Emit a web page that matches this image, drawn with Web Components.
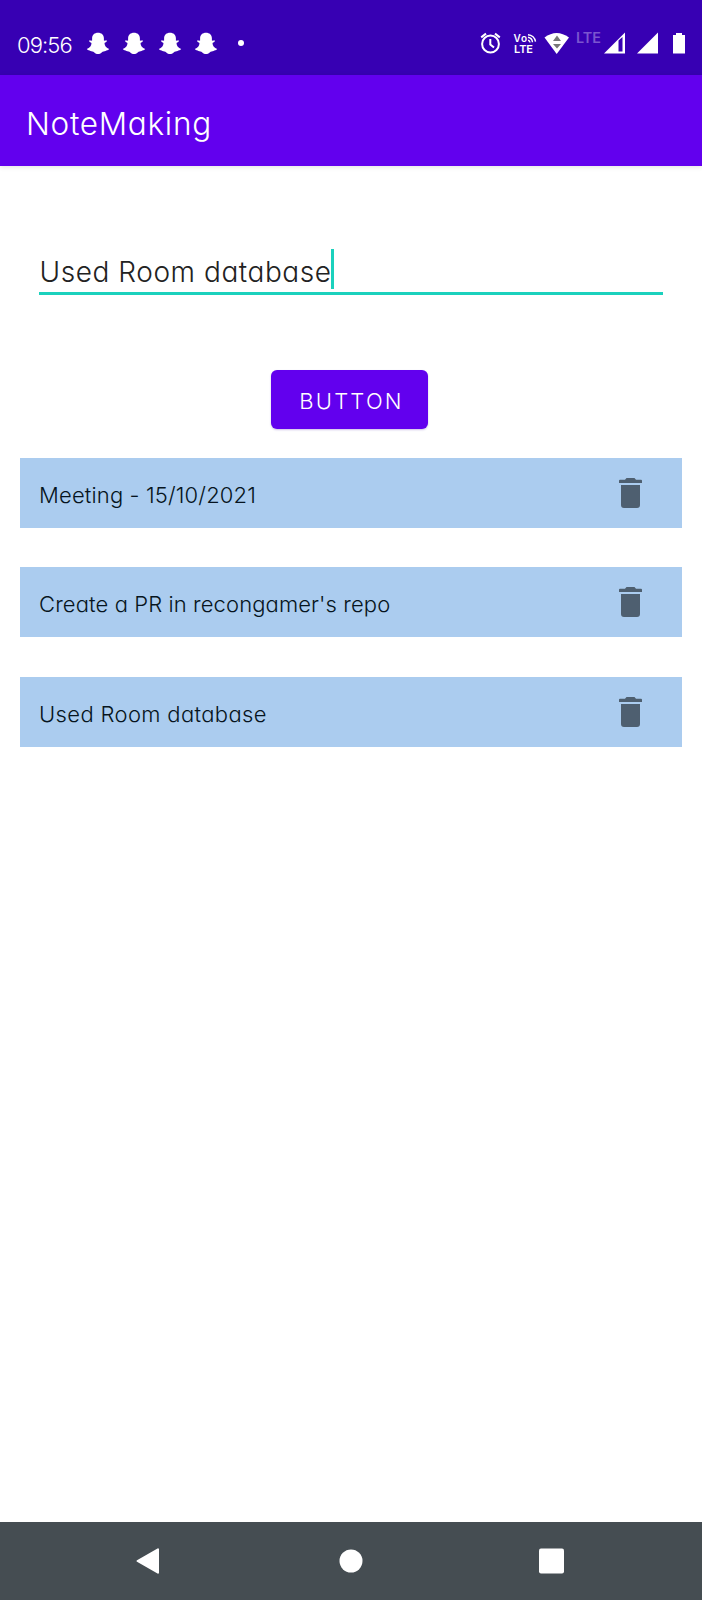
<!DOCTYPE html>
<html lang="en">
<head>
<meta charset="utf-8">
<title>NoteMaking</title>
<style>
html,body{margin:0;height:100%;background:#fff}
body{font-family:Inter,"Open Sans",sans-serif;font-weight:270;font-feature-settings:"cv11" 1,"cv05" 0}
</style>
</head>
<body>
<note-app></note-app>
<script>
const define = (name, html) => {
  const t = document.createElement('template');
  t.innerHTML = html;
  customElements.define(name, class extends HTMLElement {
    constructor() {
      super();
      this.attachShadow({ mode: 'open' }).appendChild(t.content.cloneNode(true));
    }
  });
};

define('snap-icon', `
<style>:host{display:block;width:24px;height:24px}svg{display:block}</style>
<svg width="24" height="24" viewBox="0 0 24 24"><path fill="#fff" d="M12 1.8C8.5 1.800 6.100 4 6.100 7.300V9.600C5 9.900 3.900 9.200 2.900 9.800C3.300 11.200 4.700 11.500 5.500 12C5.500 14.700 3.600 17 .8 18.100C1.500 19.600 3.500 19.400 4.500 20.100C5.500 20.800 7.200 20.500 8.300 21.400C9.500 22.300 10.600 23 12 23S14.500 22.300 15.700 21.400C16.800 20.500 18.500 20.800 19.500 20.100C20.500 19.400 22.500 19.600 23.200 18.100C20.400 17 18.500 14.700 18.500 12C19.300 11.500 20.700 11.200 21.100 9.800C20.100 9.200 19 9.900 17.900 9.600V7.300C17.900 4 15.500 1.800 12 1.800Z"/></svg>`);

define('status-bar', `
<style>
:host{display:flex;height:75px;box-sizing:border-box;background:#3700b3;color:#fff;padding:31px 0 0 17px;justify-content:space-between}
.left{display:flex;height:24px}
.time{font-size:22px;line-height:28px;width:69.300px;letter-spacing:-.9px;white-space:nowrap}
snap-icon{margin-right:11.900px}
.dot{width:6.5px;height:6.5px;border-radius:50%;background:#fff;margin:8.5px 0 0 8px}
svg{display:block}
text{font-family:Inter,sans-serif}
</style>
<div class="left"><span class="time">09:56</span><snap-icon></snap-icon><snap-icon></snap-icon><snap-icon></snap-icon><snap-icon></snap-icon><i class="dot"></i></div>
<svg width="226" height="24" viewBox="476 31 226 24" overflow="visible">
  <g fill="none" stroke="#fff" stroke-width="2">
    <circle cx="490.5" cy="44" r="8.4"/><path d="M490.3 39V44.5L494 47.5M481.2 37.4L486 33.6M495 33.6L499.800 37.4"/>
    <path stroke-width="1.400" d="M528 40.200a2.600 2.600 0 0 1 2 2.300M528 37.300a5.500 5.500 0 0 1 4.500 5M528 34.700a8 8 0 0 1 7.500 7"/>
  </g>
  <text x="513.500" y="42" font-size="10" font-weight="600" fill="#fff" textLength="13.500">Vo</text>
  <text x="514" y="53" font-size="11" font-weight="600" fill="#fff" textLength="19">LTE</text>
  <path fill="#fff" d="M544.500 37.500Q556.500 28.500 569 37.500L556.700 54Z"/>
  <path fill="#777" d="M553 41L557 35.500L561 41ZM553 44H561L557 48.500Z"/>
  <text x="576" y="43.300" font-size="14" font-weight="600" fill="#7b55cf" textLength="25" lengthAdjust="spacingAndGlyphs">LTE</text>
  <path fill="#fff" fill-rule="evenodd" d="M604 53.500L625 32.500V53.500ZM618.500 40.500V51.500H622.500V37Z"/>
  <path fill="#fff" d="M637 53.500L658 32.500V53.500ZM676 33H682V35H685V53.500H673V35H676Z"/>
</svg>`);

define('app-bar', `
<style>
:host{display:flex;align-items:center;height:91px;box-sizing:border-box;padding:6px 0 0 26px;background:#6200ee;color:#fff;font-size:31.500px;line-height:40px;letter-spacing:.7px;box-shadow:0 1px 5px rgba(0,0,0,.12)}
</style><slot></slot>`);

define('note-field', `
<style>
:host{display:flex;height:46px;margin:83px 39px 0;border-bottom:3px solid #1bd1bd;box-sizing:border-box;font-size:28px;line-height:47px;color:#222}
span{white-space:nowrap;letter-spacing:.56px;width:292px;padding-left:.5px;box-sizing:border-box}
i{width:3px;height:40px;background:#1bd1bd}
</style><span><slot></slot></span><i></i>`);

define('add-button', `
<style>
:host{display:block;margin:75px 0 0 271px;width:157px}
button{display:block;width:100%;height:58.500px;border:0;border-radius:6px;padding:4px 0 0 4px;background:#6200ee;color:#fff;font:inherit;font-size:22px;letter-spacing:2.200px;box-shadow:0 1px 2px rgba(60,0,160,.25)}
</style><button><slot></slot></button>`);

define('note-row', `
<style>
:host{display:flex;justify-content:space-between;height:70px;box-sizing:border-box;padding:20px 40px 0 19.500px;background:#abccef;color:#061420;font-size:22px;line-height:35px}
span{white-space:nowrap;letter-spacing:var(--track,0)}
svg{display:block}
</style><span><slot></slot></span>
<svg width="23" height="30" viewBox="0 0 23 30"><path fill="#4e5f70" d="M1 1.800H6L7.500 0H15.500L17 1.800H22Q23 1.800 23 2.800V5H0V2.800Q0 1.800 1 1.800ZM2 7H21V27Q21 30 18 30H5Q2 30 2 27Z"/></svg>`);

define('nav-bar', `
<style>
:host{display:block;height:78px;background:#454d52;margin-top:auto}svg{display:block}
</style>
<svg width="702" height="78" viewBox="0 0 702 78" fill="#fff"><path stroke="#fff" stroke-width="2" stroke-linejoin="round" d="M137.500 39L158 27.300V50.700Z"/><circle cx="351" cy="39" r="11.500"/><rect x="539" y="26.500" width="25" height="25" rx="2"/></svg>`);

define('note-app', `
<style>
:host{display:flex;flex-direction:column;width:702px;height:1600px;background:#fff}
.list{display:flex;flex-direction:column;gap:39.300px;margin:29.500px 19.600px 0}
</style>
<status-bar></status-bar>
<app-bar>NoteMaking</app-bar>
<note-field>Used Room database</note-field>
<add-button>BUTTON</add-button>
<div class="list">
<note-row style="--track:.14px">Meeting - 15/10/2021</note-row>
<note-row style="--track:.1px">Create a PR in recongamer's repo</note-row>
<note-row style="--track:.34px">Used Room database</note-row>
</div>
<nav-bar></nav-bar>`);
</script>
</body>
</html>
